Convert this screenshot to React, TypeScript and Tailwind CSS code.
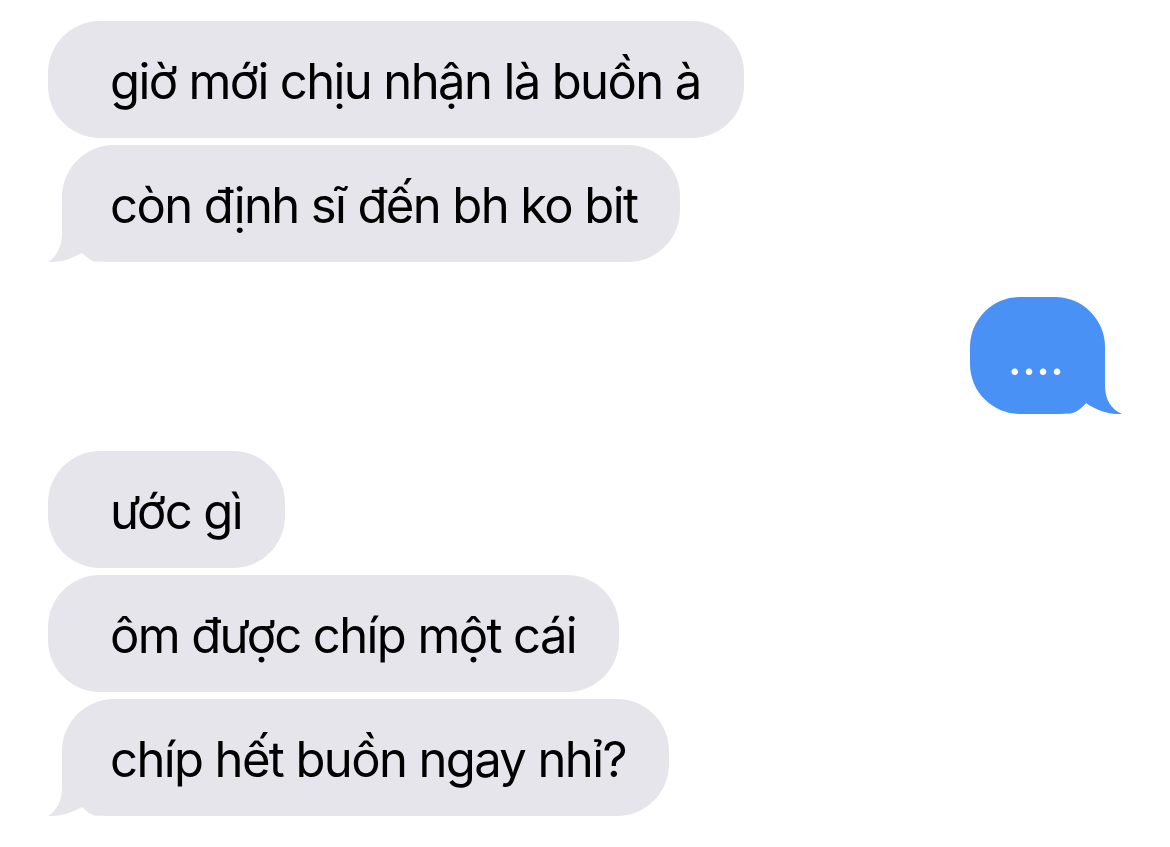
import React from "react";

type Msg = { text: string; tail?: boolean };

const GRAY = "#e6e5eb";
const BLUE = "#4a91f5";

function TailLeft() {
  return (
    <svg
      className="absolute bottom-0 left-[-14px]"
      width="64"
      height="50"
      viewBox="0 0 64 50"
    >
      <path
        d="M14 0 L14 21 C14 36 8 45 0 50 C10 50.5 22 48 34 41 C38 45 42 48 46 49.5 L64 50 L64 0 Z"
        fill={GRAY}
      />
    </svg>
  );
}

function TailRight() {
  return (
    <svg
      className="absolute bottom-0 right-[-17px]"
      width="67"
      height="50"
      viewBox="0 0 67 50"
    >
      <path
        d="M50 0 L50 21 C50 36 56 45 67 50 C56 50.5 44 48 31 39 C27 44 22 48 16 49.5 L0 50 L0 0 Z"
        fill={BLUE}
      />
    </svg>
  );
}

function GrayBubble({ text, tail }: Msg) {
  return (
    <div
      className={
        tail
          ? "relative flex h-[117px] items-center self-start rounded-[52px] ml-[62px] pl-[48px] pr-[43px] bg-[#e6e5eb]"
          : "relative flex h-[117px] items-center self-start rounded-[52px] ml-[48px] pl-[62px] pr-[43px] bg-[#e6e5eb]"
      }
    >
      {tail && <TailLeft />}
      <span className="relative pt-[4px] whitespace-nowrap">{text}</span>
    </div>
  );
}

export default function App() {
  return (
    <div
      className="w-[1170px] h-[847px] bg-white text-black overflow-hidden flex flex-col pt-[21px] text-[49px] leading-none tracking-[-0.033em]"
      style={{ fontFamily: "Inter, 'Noto Sans', sans-serif" }}
    >
      <div className="flex flex-col gap-[7px]">
        <GrayBubble text="giờ mới chịu nhận là buồn à" />
        <GrayBubble text="còn định sĩ đến bh ko bit" tail />
      </div>

      <div className="flex justify-end mt-[35px] pr-[65px]">
        <div className="relative flex h-[117px] w-[135px] items-center justify-center rounded-[50px] bg-[#4a91f5] text-white">
          <TailRight />
          <span className="relative pt-[4px] pr-[3px] tracking-normal">....</span>
        </div>
      </div>

      <div className="flex flex-col gap-[7px] mt-[37px]">
        <GrayBubble text="ước gì" />
        <GrayBubble text="ôm được chíp một cái" />
        <GrayBubble text="chíp hết buồn ngay nhỉ?" tail />
      </div>
    </div>
  );
}
